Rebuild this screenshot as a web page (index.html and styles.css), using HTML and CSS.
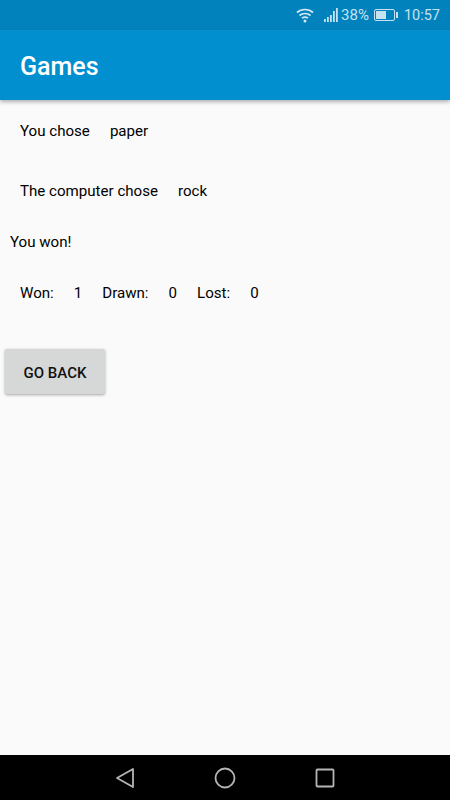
FILE: index.html
```html
<!DOCTYPE html>
<html lang="en">
<head>
    <meta charset="UTF-8">
    <meta name="viewport" content="width=device-width, initial-scale=1.0">
    <title>Games</title>
    <link rel="stylesheet" href="styles.css">
</head>
<body>
    <div class="status-bar">
        <svg class="wifi" width="18" height="16" viewBox="0 0 18 16">
            <path d="M1 5.500C5.500 1.500 12.500 1.500 17 5.500" />
            <path d="M3.500 8.500C6.500 5.800 11.500 5.800 14.500 8.500" />
            <path d="M6 11.200C7.800 9.800 10.200 9.800 12 11.200" />
            <circle cx="9" cy="14" r="1.500" />
        </svg>
        <svg class="signal" width="15" height="16" viewBox="0 0 15 16">
            <rect x="0" y="12" width="1.800" height="3" />
            <rect x="3" y="10" width="1.800" height="5" />
            <rect x="6" y="8" width="1.800" height="7" />
            <rect x="9" y="4" width="1.800" height="11" />
            <rect x="12" y="1" width="1.800" height="14" />
        </svg>
        <span class="battery-pct">38%</span>
        <div class="battery"><div class="battery-level"></div></div>
        <div class="battery-tip"></div>
        <span class="clock">10:57</span>
    </div>
    <header class="app-bar">
        <h1>Games</h1>
    </header>
    <main class="content">
        <div class="row">
            <span>You chose</span>
            <span>paper</span>
        </div>
        <div class="row row-computer">
            <span>The computer chose</span>
            <span>rock</span>
        </div>
        <p class="result">You won!</p>
        <div class="row row-score">
            <span>Won:</span><span>1</span>
            <span>Drawn:</span><span>0</span>
            <span>Lost:</span><span>0</span>
        </div>
        <button class="back-btn" type="button">Go back</button>
    </main>
    <nav class="nav-bar">
        <svg width="20" height="22" viewBox="0 0 20 22"><path d="M18 2V20L2 11Z" /></svg>
        <svg width="22" height="22" viewBox="0 0 22 22"><circle cx="11" cy="11" r="9.500" /></svg>
        <svg width="20" height="20" viewBox="0 0 20 20"><rect x="1.500" y="1.500" width="17" height="17" rx="1" /></svg>
    </nav>
</body>
</html>
```

FILE: styles.css
```css
* {
    box-sizing: border-box;
}

body {
    margin: 0;
    height: 800px;
    display: flex;
    flex-direction: column;
    overflow: hidden;
    background: #fafafa;
    color: #000;
    font-family: 'Roboto', sans-serif;
    font-size: 15.1px;
}

.status-bar {
    height: 30px;
    flex-shrink: 0;
    display: flex;
    align-items: center;
    padding-right: 10px;
    background: #0282bd;
    color: #c4e2f1;
    font-size: 15px;
}

.wifi {
    margin-left: auto;
    margin-right: 10px;
    fill: #d5eaf5;
    stroke: none;
}

.wifi path {
    fill: none;
    stroke: #d5eaf5;
    stroke-width: 1.700;
}

.signal {
    fill: #c4e2f1;
    margin-right: 2px;
}

.battery-pct {
    margin-right: 5px;
}

.battery {
    width: 21px;
    height: 12px;
    padding: 1px;
    border: 1px solid #c4e2f1;
    border-radius: 2px;
}

.battery-level {
    width: 10px;
    height: 100%;
    background: #c4e2f1;
}

.battery-tip {
    width: 2px;
    height: 6px;
    margin-left: 1px;
    margin-right: 6px;
    background: #c4e2f1;
}

.clock {
    font-size: 14.5px;
}

.app-bar {
    height: 70px;
    flex-shrink: 0;
    display: flex;
    align-items: center;
    padding-left: 20px;
    padding-top: 2px;
    background: #028fd0;
    box-shadow: 0 2px 4px rgba(0, 0, 0, 0.3);
}

.app-bar h1 {
    margin: 0;
    color: #fff;
    font-size: 25px;
    font-weight: 500;
}

.content {
    flex: 1;
    padding-top: 21px;
}

.row {
    display: flex;
    gap: 20px;
    padding-left: 20px;
    line-height: 20px;
}

.row-computer {
    margin-top: 40px;
}

.result {
    margin: 31px 0 0 10px;
    line-height: 20px;
}

.row-score {
    margin-top: 31px;
}

.back-btn {
    display: block;
    width: 100px;
    height: 45px;
    margin: 46px 0 0 5px;
    padding: 2px 0 0;
    border: none;
    border-radius: 2px;
    background: #d6d7d7;
    box-shadow: 0 1px 3px rgba(0, 0, 0, 0.35);
    color: #111;
    font-family: 'Roboto', sans-serif;
    font-size: 15px;
    font-weight: 500;
    text-transform: uppercase;
}

.nav-bar {
    height: 45px;
    flex-shrink: 0;
    display: flex;
    justify-content: center;
    align-items: center;
    gap: 79px;
    background: #000;
}

.nav-bar svg {
    fill: none;
    stroke: #b5b5b5;
    stroke-width: 1.800;
    stroke-linejoin: round;
}
```
